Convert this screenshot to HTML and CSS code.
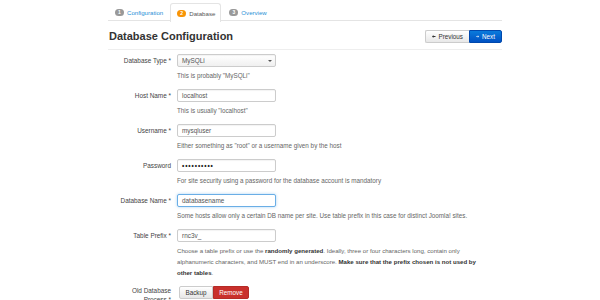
FILE: index.html
```html
<!DOCTYPE html>
<html>
<head>
<meta charset="utf-8">
<link rel="stylesheet" href="styles.css">
</head>
<body>
<div class="page">
  <ul class="tabs">
    <li class="tab"><span class="badge">1</span><a>Configuration</a></li>
    <li class="tab active"><span class="badge orange">2</span><span class="cur">Database</span></li>
    <li class="tab"><span class="badge">3</span><a>Overview</a></li>
  </ul>
  <div class="header">
    <h1>Database Configuration</h1>
    <div class="nav">
      <span class="btn prev"><svg width="6" height="5" viewBox="0 0 6 5"><path d="M0 2.5L2.5 0V1.8H6V3.2H2.5V5Z" fill="#333"/></svg>Previous</span><span class="btn next"><svg width="6" height="5" viewBox="0 0 6 5"><path d="M6 2.5L3.5 0V1.8H0V3.2H3.5V5Z" fill="#fff"/></svg>Next</span>
    </div>
  </div>
  <div class="form">
    <div class="row">
      <label>Database Type *</label>
      <div class="ctrl">
        <div class="input select">MySQLi<span class="caret"></span></div>
        <div class="help">This is probably "MySQLi"</div>
      </div>
    </div>
    <div class="row">
      <label>Host Name *</label>
      <div class="ctrl">
        <div class="input">localhost</div>
        <div class="help">This is usually "localhost"</div>
      </div>
    </div>
    <div class="row">
      <label>Username *</label>
      <div class="ctrl">
        <div class="input">mysqluser</div>
        <div class="help">Either something as "root" or a username given by the host</div>
      </div>
    </div>
    <div class="row">
      <label>Password</label>
      <div class="ctrl">
        <div class="input pw">••••••••••</div>
        <div class="help">For site security using a password for the database account is mandatory</div>
      </div>
    </div>
    <div class="row">
      <label>Database Name *</label>
      <div class="ctrl">
        <div class="input focus">databasename</div>
        <div class="help">Some hosts allow only a certain DB name per site. Use table prefix in this case for distinct Joomla! sites.</div>
      </div>
    </div>
    <div class="row">
      <label>Table Prefix *</label>
      <div class="ctrl">
        <div class="input">rnc3v_</div>
        <div class="help wide">Choose a table prefix or use the <b>randomly generated</b>. Ideally, three or four characters long, contain only alphanumeric characters, and MUST end in an underscore. <b>Make sure that the prefix chosen is not used by other tables</b>.</div>
      </div>
    </div>
    <div class="row">
      <label class="two">Old Database Process *</label>
      <div class="ctrl">
        <div class="group"><span class="btn backup">Backup</span><span class="btn remove">Remove</span></div>
      </div>
    </div>
  </div>
</div>
</body>
</html>
```

FILE: styles.css
```css
html, body {
  margin: 0;
  padding: 0;
  background: #fff;
  font-family: "Liberation Sans", Arial, sans-serif;
  color: #555;
}
.page {
  width: 394px;
  margin-left: 108px;
}
.tabs {
  list-style: none;
  margin: 0;
  padding: 3px 0 0 0;
  display: flex;
  border-bottom: 1px solid #e4e4e4;
  height: 17px;
}
.tab {
  display: flex;
  align-items: center;
  height: 17px;
  padding: 0 5px 0 6px;
  margin-right: 1px;
  border: 1px solid transparent;
  border-bottom: none;
  border-radius: 3px 3px 0 0;
  font-size: 6.1px;
}
.tab a { color: #2a8fd6; }
.tab.active {
  border-color: #e4e4e4;
  background: #fff;
  height: 18px;
  margin-bottom: -1px;
}
.cur { color: #555; }
.badge {
  display: inline-block;
  width: 9px;
  height: 7px;
  line-height: 7px;
  border-radius: 4px;
  background: #999;
  color: #fff;
  font-size: 5px;
  font-weight: bold;
  text-align: center;
  margin-right: 3px;
}
.badge.orange { background: #f89406; }
.header {
  display: flex;
  justify-content: space-between;
  align-items: center;
  padding: 8px 0 6px 1px;
  border-bottom: 1px solid #eee;
}
h1 {
  margin: 0;
  font-size: 11px;
  line-height: 14px;
  font-weight: bold;
  color: #333;
}
.nav { display: flex; margin-right: 0; }
.btn {
  display: inline-flex;
  align-items: center;
  height: 13px;
  box-sizing: border-box;
  font-size: 6.3px;
  padding: 0 6px;
  border: 1px solid #ccc;
  border-radius: 2px;
}
.btn svg { margin-right: 3px; }
.prev {
  width: 44px;
  background: linear-gradient(#fff, #e8e8e8);
  color: #333;
  border-radius: 2px 0 0 2px;
  border-right: none;
}
.next {
  width: 33px;
  background: linear-gradient(#0a7bdc, #0051c3);
  border-color: #0048ad;
  color: #fff;
  border-radius: 0 2px 2px 0;
}
.form { padding-top: 4px; }
.row {
  display: flex;
  margin-bottom: 8px;
}
label {
  width: 63px;
  text-align: right;
  font-size: 6.4px;
  line-height: 13px;
  color: #444;
  flex-shrink: 0;
}
label.two {
  line-height: 9px;
  padding-top: 0;
  padding-left: 18px;
  width: 45px;
  box-sizing: content-box;
}
.ctrl {
  margin-left: 6px;
}
.input {
  width: 99px;
  height: 13px;
  box-sizing: border-box;
  border: 1px solid #ccc;
  border-radius: 2px;
  padding: 0 4px;
  font-size: 6.4px;
  line-height: 11px;
  color: #555;
  background: #fff;
  position: relative;
  box-shadow: inset 0 1px 1px rgba(0,0,0,0.05);
}
.input.select {
  background: linear-gradient(#fff, #f0f0f0);
}
.caret {
  position: absolute;
  right: 3px;
  top: 5px;
  border-left: 2px solid transparent;
  border-right: 2px solid transparent;
  border-top: 2px solid #555;
}
.input.pw { font-size: 6.5px; letter-spacing: 0.9px; color: #222; font-weight: bold; }
.input.focus {
  border-color: #6aaee6;
  box-shadow: 0 0 3px rgba(82,168,236,0.5);
}
.help {
  margin-top: 4px;
  font-size: 6.3px;
  line-height: 10px;
  color: #666;
  white-space: nowrap;
}
.help.wide {
  white-space: normal;
  width: 312px;
  font-size: 6.1px;
  line-height: 11px;
  margin-top: 3px;
}
.help b { color: #333; }
.group { display: flex; margin-left: 2px; }
.backup {
  width: 34px;
  justify-content: center;
  background: linear-gradient(#fff, #e6e6e6);
  color: #333;
  border-radius: 2px 0 0 2px;
}
.remove {
  width: 36px;
  justify-content: center;
  background: #c9302c;
  border-color: #b52b27;
  color: #fff;
  border-radius: 0 2px 2px 0;
}
```
